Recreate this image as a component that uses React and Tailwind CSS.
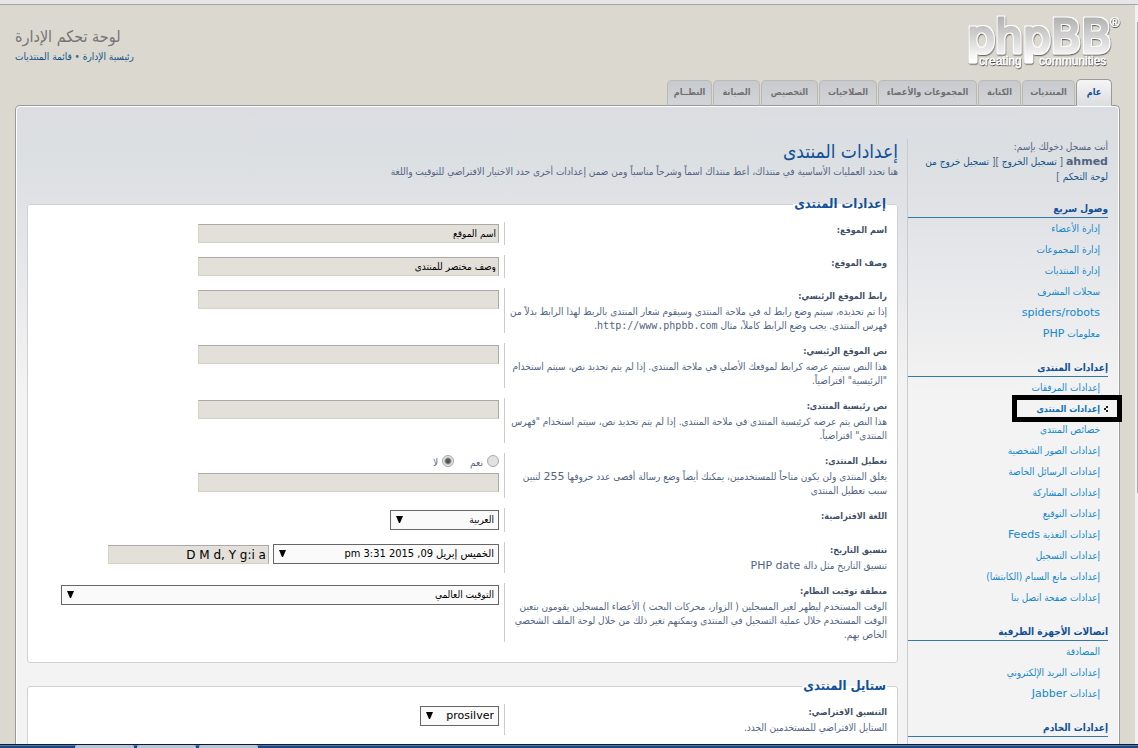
import React from "react";

const tabs = [
  { label: "عام", width: "w-[36px]", active: true },
  { label: "المنتديات", width: "w-[53px]" },
  { label: "الكتابة", width: "w-[43px]" },
  { label: "المجموعات والأعضاء", width: "w-[99px]" },
  { label: "الصلاحيات", width: "w-[58px]" },
  { label: "التخصيص", width: "w-[57px]" },
  { label: "الصيانة", width: "w-[47px]" },
  { label: "النظــام", width: "w-[45px]" },
];

const menu = [
  {
    title: "وصول سريع",
    items: ["إدارة الأعضاء", "إدارة المجموعات", "إدارة المنتديات", "سجلات المشرف", "spiders/robots", "معلومات PHP"],
  },
  {
    title: "إعدادات المنتدى",
    active: 1,
    items: [
      "إعدادات المرفقات",
      "إعدادات المنتدى",
      "خصائص المنتدى",
      "إعدادات الصور الشخصية",
      "إعدادات الرسائل الخاصة",
      "إعدادات المشاركة",
      "إعدادات التوقيع",
      "إعدادات التغذية Feeds",
      "إعدادات التسجيل",
      "إعدادات مانع السبام (الكابتشا)",
      "إعدادات صفحة اتصل بنا",
    ],
  },
  {
    title: "اتصالات الأجهزة الطرفية",
    items: ["المصادقة", "إعدادات البريد الإلكتروني", "إعدادات Jabber"],
  },
  { title: "إعدادات الخادم", items: [] },
];

/* Latin words and digits are set one size larger than the Arabic around them. */
function Mixed({ text }) {
  return text.split(/([A-Za-z0-9/]+(?: [A-Za-z0-9/]+)*)/).map((part, i) =>
    i % 2 ? (
      <span key={i} className="font-['DejaVu_Sans',sans-serif] text-[11px]">
        {part}
      </span>
    ) : (
      part
    )
  );
}

function Logo() {
  return (
    <svg className="overflow-visible" width="156" height="56" viewBox="0 0 156 56" role="img" aria-label="phpBB" direction="ltr">
      <defs>
        <linearGradient id="metal" gradientUnits="userSpaceOnUse" x1="0" y1="4" x2="0" y2="46">
          <stop offset="0" stopColor="#b4b4b4" />
          <stop offset="0.6" stopColor="#e0e0e0" />
          <stop offset="1" stopColor="#ffffff" />
        </linearGradient>
        <filter id="rim" x="-5%" y="-10%" width="110%" height="130%">
          <feMorphology in="SourceAlpha" operator="dilate" radius="1" result="fat" />
          <feFlood floodColor="#ffffff" />
          <feComposite in2="fat" operator="in" result="edge" />
          <feDropShadow in="edge" dx="0.5" dy="1.2" stdDeviation="0.6" floodColor="#5b5b5b" floodOpacity="0.9" result="lifted" />
          <feMerge>
            <feMergeNode in="lifted" />
            <feMergeNode in="SourceGraphic" />
          </feMerge>
        </filter>
        <filter id="drop" x="-5%" y="-10%" width="110%" height="140%">
          <feDropShadow dx="0.5" dy="1" stdDeviation="0.5" floodColor="#4b4b4b" floodOpacity="1" />
        </filter>
      </defs>
      <text
        x="3"
        y="37"
        fontFamily="'DejaVu Sans', sans-serif"
        fontSize="44"
        fill="url(#metal)"
        stroke="url(#metal)"
        strokeWidth="2.8"
        strokeLinejoin="round"
        filter="url(#rim)"
      >
        phpBB
      </text>
      <g fontFamily="'Liberation Sans', sans-serif" fontSize="12" fill="#fff" stroke="#fff" strokeWidth="0.3" filter="url(#drop)">
        <text x="15" y="50">creating</text>
        <text x="75" y="50">communities</text>
        <text x="146" y="12" fontSize="13">®</text>
      </g>
    </svg>
  );
}

function TextBox({ id, value, width, label, latin }) {
  return (
    <input
      id={id}
      type="text"
      aria-label={label}
      defaultValue={value}
      className={`block h-[19px] max-w-full border border-t-[#a9a9a9] border-r-[#a9a9a9] border-b-[#d5d3c6] border-l-[#d5d3c6] bg-[#e3dfd9] px-0.5 text-black ${
        latin ? "font-['DejaVu_Sans',sans-serif] text-[12px]" : "text-[10px]"
      } ${width}`}
    />
  );
}

function SelectBox({ id, value, width, size = "text-[10px]" }) {
  return (
    <span className={`relative block max-w-full ${width}`}>
      <select
        id={id}
        defaultValue={value}
        className={`block h-5 w-full appearance-none border border-[#666666] bg-[#fafafa] px-1 leading-4 text-black ${size}`}
      >
        <option>{value}</option>
      </select>
      <svg className="pointer-events-none absolute top-1.5 left-1.5" width="7" height="7" viewBox="0 0 7 7">
        <path d="M0 0H7L4 7H3Z" fill="#000" />
      </svg>
    </span>
  );
}

function Row({ id, label, help, children }) {
  return (
    <div className="mb-2.5 grid grid-cols-[45%_1fr]">
      <div className="pl-0.5">
        <label htmlFor={id} className="block text-[9px] leading-[17px] font-bold text-[#425067]">
          {label}
        </label>
        {help && (
          <p className="text-[10px] leading-[14px] text-[#536482]">
            {typeof help === "string" ? <Mixed text={help} /> : help}
          </p>
        )}
      </div>
      <div className="border-r border-[#cccccc] py-0.5 pr-[5px]">{children}</div>
    </div>
  );
}

function Panel({ title, children }) {
  return (
    <fieldset className="mb-3.5 min-w-0 rounded-[3px] border border-[#d0d0d0] bg-white px-2.5 pb-2.5">
      <legend className="px-px text-[13px] leading-[18px] font-bold text-[#115098]">{title}</legend>
      <div className="pt-[9px]">{children}</div>
    </fieldset>
  );
}

function SideMenu() {
  return (
    <nav className="pt-px">
      {menu.map((group) => (
        <section key={group.title}>
          <h2 className="mt-[15px] border-b border-[#327aa5] text-[10px] leading-[17px] font-bold text-[#115098]">
            {group.title}
          </h2>
          <ul>
            {group.items.map((item, i) => {
              const active = group.active === i;
              return (
                <li key={item} className="relative h-[21px] pr-2 text-[10px] leading-[21px] whitespace-nowrap">
                  <a href="#" className={active ? "text-[9px] font-bold text-[#0f6fb0]" : "text-[#1488cc]"}>
                    <Mixed text={item} />
                  </a>
                  {active && (
                    <>
                      <svg className="absolute top-2 right-0" width="4" height="6" viewBox="0 0 4 6">
                        <path d="M2 0H4V2H2ZM0 2H2V4H0ZM2 4H4V6H2Z" fill="#222" />
                      </svg>
                      <span className="pointer-events-none absolute -top-[3px] -right-[14px] h-[27px] w-[110px] border-[5px] border-black" />
                    </>
                  )}
                </li>
              );
            })}
          </ul>
        </section>
      ))}
    </nav>
  );
}

export default function App() {
  return (
    <div className="flex h-screen flex-col overflow-hidden bg-[#dbd8d0] font-['DejaVu_Sans_Condensed','DejaVu_Sans',sans-serif] text-[11px] text-[#536482]">
      <div className="h-[5px] shrink-0 border-b border-[#a5a5a5] bg-[#e6e6e6]" />
      <div className="flex min-h-0 flex-1">
        <div dir="rtl" className="flex min-w-0 flex-1 flex-col overflow-hidden px-[15px]">
          <header className="flex h-[74px] shrink-0 items-start justify-between">
            <a href="#" className="mt-2.5">
              <Logo />
            </a>
            <div className="pt-5 text-left">
              <h1 className="text-[16px] leading-6 text-[#767676]">لوحة تحكم الإدارة</h1>
              <p className="text-[10px] leading-4">
                <a href="#" className="text-[#105289]">رئيسية الإدارة</a> •{" "}
                <a href="#" className="text-[#105289]">قائمة المنتديات</a>
              </p>
            </div>
          </header>

          <nav className="relative z-10 -mb-px flex h-[27px] shrink-0 items-end gap-px pr-2">
            {tabs.map((t) => (
              <a
                key={t.label}
                href="#"
                className={`flex items-center justify-center rounded-t-[5px] border text-[9px] font-bold whitespace-nowrap ${t.width} ${
                  t.active
                    ? "h-[27px] border-[#999999] border-b-[#dcdee2] bg-linear-to-b from-[#f5f5f5] to-[#dcdee2] text-[#115098]"
                    : "h-[26px] border-[#b9b9b6] border-b-[#999999] bg-linear-to-b from-[#c9cace] to-[#d3d4d7] text-[#6f6f6f]"
                }`}
              >
                {t.label}
              </a>
            ))}
          </nav>

          <div className="flex flex-1 shrink-0 items-stretch rounded-t-[5px] border border-b-0 border-[#999999] bg-[#f3f3f3] bg-[linear-gradient(180deg,#dcdde2_0px,#dbdfe2_45px,#e2e3e7_115px,#f3f3f3_285px)] pt-[33px] pr-[11px] pl-[11px] shadow-[inset_0_0_0_1px_#ffffff]">
            <aside className="w-[201px] shrink-0 border-l border-[#cccccc]">
              <p className="text-[10px] leading-[15px]">أنت مسجل دخولك بإسم:</p>
              <p className="text-[10px] leading-[15px]">
                <strong className="font-['DejaVu_Sans',sans-serif] text-[11px]">ahmed</strong> [{" "}
                <a href="#" className="text-[#105289]">تسجيل الخروج</a> ][{" "}
                <a href="#" className="text-[#105289]">تسجيل خروج من لوحة التحكم</a> ]
              </p>
              <SideMenu />
            </aside>

            <main className="mr-[9px] min-w-0 flex-1">
              <h2 className="text-[19px] leading-6 text-[#115098]">إعدادات المنتدى</h2>
              <p className="mb-3.5 text-[10px] leading-[18px]">
                هنا تحدد العمليات الأساسية في منتداك، أعط منتداك اسماً وشرحاً مناسباً ومن ضمن إعدادات أخرى حدد الاختيار الافتراضي للتوقيت واللغة
              </p>

              <Panel title="إعدادات المنتدى">
                <Row id="site" label="اسم الموقع:">
                  <TextBox id="site" value="اسم الموقع" width="w-[301px]" />
                </Row>
                <Row id="desc" label="وصف الموقع:">
                  <TextBox id="desc" value="وصف مختصر للمنتدى" width="w-[301px]" />
                </Row>
                <Row
                  id="home"
                  label="رابط الموقع الرئيسي:"
                  help={
                    <>
                      إذا تم تحديده، سيتم وضع رابط له في ملاحة المنتدى وسيقوم شعار المنتدى بالربط لهذا الرابط بدلاً من فهرس المنتدى. يجب وضع الرابط كاملاً، مثال{" "}
                      <code className="font-['DejaVu_Sans_Mono',monospace]">http://www.phpbb.com</code>.
                    </>
                  }
                >
                  <TextBox id="home" width="w-[301px]" />
                </Row>
                <Row
                  id="hometext"
                  label="نص الموقع الرئيسي:"
                  help={'هذا النص سيتم عرضه كرابط لموقعك الأصلي في ملاحة المنتدى. إذا لم يتم تحديد نص، سيتم استخدام "الرئيسية" افتراضياً.'}
                >
                  <TextBox id="hometext" width="w-[301px]" />
                </Row>
                <Row
                  id="indextext"
                  label="نص رئيسية المنتدى:"
                  help={'هذا النص يتم عرضه كرئيسية المنتدى في ملاحة المنتدى. إذا لم يتم تحديد نص، سيتم استخدام "فهرس المنتدى" افتراضياً.'}
                >
                  <TextBox id="indextext" width="w-[301px]" />
                </Row>
                <Row
                  id="disable"
                  label="تعطيل المنتدى:"
                  help="يغلق المنتدى ولن يكون متاحاً للمستخدمين، يمكنك أيضاً وضع رسالة أقصى عدد حروفها 255 لتبين سبب تعطيل المنتدى"
                >
                  <div className="flex h-[18px] gap-4 text-[10px]">
                    {["نعم", "لا"].map((name, i) => (
                      <label key={name} className="flex items-start gap-1 leading-4">
                        <input
                          type="radio"
                          name="board_disable"
                          defaultChecked={i === 1}
                          className="size-3 appearance-none rounded-full border border-[#a8a8a8] bg-[#e2e2e2] checked:bg-[radial-gradient(circle,#555_2px,#e2e2e2_4px)]"
                        />
                        {name}
                      </label>
                    ))}
                  </div>
                  <TextBox id="disable" width="w-[301px]" />
                </Row>
                <Row id="lang" label="اللغة الافتراضية:">
                  <SelectBox id="lang" value="العربية" width="w-[109px]" />
                </Row>
                <Row id="date" label="تنسيق التاريخ:" help="تنسيق التاريخ مثل دالة PHP date">
                  <div className="flex items-end gap-1">
                    <SelectBox id="date" value="الخميس إبريل 09, 2015 3:31 pm" width="w-[226px]" size="text-[11px]" />
                    <TextBox label="تنسيق التاريخ" value="D M d, Y g:i a" width="w-[161px]" latin />
                  </div>
                </Row>
                <Row
                  id="tz"
                  label="منطقة توقيت النظام:"
                  help="الوقت المستخدم ليظهر لغير المسجلين ( الزوار، محركات البحث ) الأعضاء المسجلين يقومون بتعين الوقت المستخدم خلال عملية التسجيل في المنتدى ويمكنهم تغير ذلك من خلال لوحة الملف الشخصي الخاص بهم."
                >
                  <SelectBox id="tz" value="التوقيت العالمي" width="w-[438px]" />
                </Row>
              </Panel>

              <Panel title="ستايل المنتدى">
                <Row id="style" label="التنسيق الافتراضي:" help="الستايل الافتراضي للمستخدمين الجدد.">
                  <SelectBox
                    id="style"
                    value="prosilver"
                    width="w-[79px]"
                    size="font-['DejaVu_Sans',sans-serif] text-[11px]"
                  />
                </Row>
              </Panel>
            </main>
          </div>
        </div>
        <div className="w-[3px] shrink-0 bg-[#f1f1f1] pt-[17px] pl-0.5">
          <div className="h-[471px] bg-[#a8a8a8]" />
        </div>
      </div>
      <div className="flex h-1 shrink-0 gap-[3px] border-t border-[#0d1b33] bg-linear-to-b from-[#7e9cc8] to-[#1d4682] to-40% pl-[75px]">
        <span className="w-[59px] rounded-t-xs bg-[#b9c6da]" />
        <span className="w-[59px] rounded-t-xs bg-[#b9c6da]" />
        <span className="w-[59px] rounded-t-xs bg-[#b9c6da]" />
      </div>
    </div>
  );
}
